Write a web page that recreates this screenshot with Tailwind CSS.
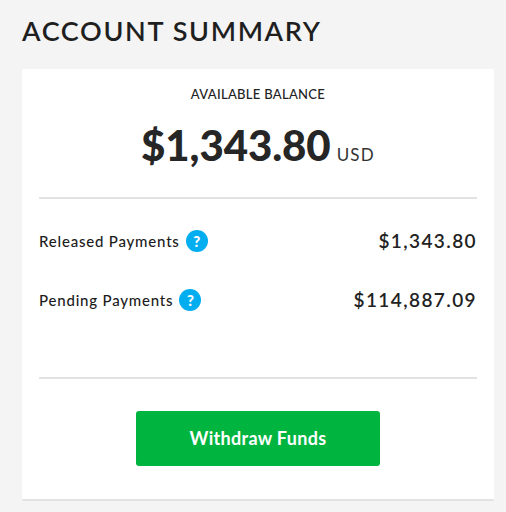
<!DOCTYPE html>
<html lang="en">
<head>
    <meta charset="UTF-8">
    <title>Account Summary</title>
    <script src="https://cdn.jsdelivr.net/npm/@tailwindcss/browser@4"></script>
</head>
<body class="bg-[#f4f4f4] font-['Lato',sans-serif] text-[#222] w-[506px] h-[512px] overflow-hidden">
    <div class="pl-[22px] pr-[12px] pt-[14px]">
        <h1 class="text-[27px] leading-[34px] font-semibold tracking-[1.65px] text-[#1f1f1f]">ACCOUNT SUMMARY</h1>

        <div class="mt-[21px] h-[432px] bg-white rounded-[2px] border-b-2 border-[#e2e2e2] px-[17px]">
            <p class="pt-[16px] text-center text-[13px] leading-[18px] font-medium tracking-[0.3px]">AVAILABLE BALANCE</p>
            <div class="mt-[16px] flex justify-center items-baseline gap-[6px]">
                <span class="text-[42px] leading-[52px] font-black tracking-[-0.1px] text-[#262626]">$1,343.80</span>
                <span class="text-[17px] tracking-[1.2px] text-[#333]">USD</span>
            </div>

            <div class="mt-[26px] border-t-2 border-[#e2e2e2]"></div>

            <div class="mt-[30px] flex justify-between items-center h-[24px]">
                <div class="flex items-center gap-[6px]">
                    <span class="text-[15px] font-medium tracking-[0.8px] text-[#1c1c1c]">Released Payments</span>
                    <span class="w-[22px] h-[22px] rounded-full bg-[#03aef0] text-white text-[15px] font-black flex items-center justify-center">?</span>
                </div>
                <span class="text-[19px] font-semibold tracking-[1.4px]">$1,343.80</span>
            </div>
            <div class="mt-[35px] flex justify-between items-center h-[24px]">
                <div class="flex items-center gap-[6px]">
                    <span class="text-[15px] font-medium tracking-[0.8px] text-[#1c1c1c]">Pending Payments</span>
                    <span class="w-[22px] h-[22px] rounded-full bg-[#03aef0] text-white text-[15px] font-black flex items-center justify-center">?</span>
                </div>
                <span class="text-[19px] font-semibold tracking-[1.4px]">$114,887.09</span>
            </div>

            <div class="mt-[65px] border-t-2 border-[#e2e2e2]"></div>

            <div class="mt-[32px] flex justify-center">
                <button class="w-[244px] h-[55px] bg-[#00b53f] rounded-[3px] text-white text-[18px] font-bold tracking-[0.3px]">Withdraw Funds</button>
            </div>
        </div>
    </div>
</body>
</html>
